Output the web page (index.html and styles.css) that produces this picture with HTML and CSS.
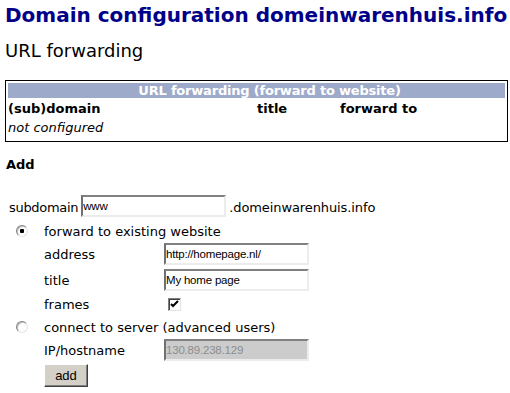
FILE: index.html
```html
<!DOCTYPE html>
<html>
    <head>
        <meta charset="utf-8">
        <title>Domain configuration domeinwarenhuis.info</title>
        <link rel="stylesheet" href="styles.css">
    </head>
    <body>
        <h1>Domain configuration domeinwarenhuis.info</h1>
        <h2>URL forwarding</h2>
        <table class="list" cellspacing="2">
            <colgroup>
                <col class="col_domain">
                <col class="col_title">
                <col>
            </colgroup>
            <tr>
                <th colspan="3" class="caption">URL forwarding (forward to website)</th>
            </tr>
            <tr class="head_row">
                <th>(sub)domain</th>
                <th>title</th>
                <th>forward to</th>
            </tr>
            <tr>
                <td colspan="3" class="empty">not configured</td>
            </tr>
        </table>
        <h3>Add</h3>
        <form class="add_form" onsubmit="return false">
            <div class="sub_row">
                <span class="sub_label">subdomain</span>
                <input type="text" class="txt sub_input" value="www">
                <span>.domeinwarenhuis.info</span>
            </div>
            <div class="opts">
                <input type="radio" name="type" class="radio" checked>
                <span class="opt_label">forward to existing website</span>

                <span></span>
                <span>address</span>
                <input type="text" class="txt" value="http://homepage.nl/">

                <span></span>
                <span>title</span>
                <input type="text" class="txt" value="My home page">

                <span></span>
                <span>frames</span>
                <input type="checkbox" class="check" checked>

                <input type="radio" name="type" class="radio">
                <span class="opt_label">connect to server (advanced users)</span>

                <span></span>
                <span>IP/hostname</span>
                <input type="text" class="txt" value="130.89.238.129" disabled>

                <span></span>
                <span class="btn_cell"><input type="submit" class="btn" value="add"></span>
            </div>
        </form>
    </body>
</html>
```

FILE: styles.css
```css
* {
    margin: 0;
    padding: 0;
}
body {
    margin: 0;
    padding: 0 5px;
    font-family: "DejaVu Sans", Verdana, sans-serif;
    font-size: 13px;
    color: #000;
    background: #fff;
}
h1 {
    font-size: 20px;
    font-weight: bold;
    color: #000088;
    line-height: 24px;
    margin-top: 3px;
    white-space: nowrap;
}
h2 {
    font-size: 18px;
    font-weight: normal;
    line-height: 22px;
    margin-top: 13px;
}
.list {
    width: 503px;
    table-layout: fixed;
    border: 1px solid #000;
    margin-top: 18px;
}
.col_domain {
    width: 247px;
}
.col_title {
    width: 81px;
}
.list th, .list td {
    text-align: left;
    padding: 0;
    line-height: 17px;
    vertical-align: top;
    white-space: nowrap;
}
.list .caption {
    background: #9eaac9;
    color: #fff;
    text-align: center;
    height: 15px;
    line-height: 15px;
    padding-left: 26px;
    letter-spacing: -0.2px;
}
.head_row th {
    height: 17px;
}
.empty {
    font-style: italic;
    height: 20px;
}
h3 {
    font-size: 13px;
    font-weight: bold;
    line-height: 17px;
    margin: 14px 0 0 1px;
}
.add_form {
    padding-left: 4px;
    margin-top: 22px;
}
.sub_row {
    display: flex;
    align-items: center;
    gap: 3px;
    height: 22px;
    letter-spacing: -0.1px;
}
.sub_row span {
    padding-top: 2px;
}
.sub_label {
    letter-spacing: -0.3px;
}
.sub_input {
    width: 145px;
}
.opts {
    display: grid;
    grid-template-columns: 35px 120px 1fr;
    grid-template-rows: 22px 24px 28px 20px 26px 20px 30px;
    align-items: center;
    margin-top: 3px;
}
.opt_label {
    grid-column: span 2;
}
.radio {
    appearance: none;
    width: 12px;
    height: 12px;
    margin-left: 7px;
    border-radius: 50%;
    border: 1px solid;
    border-color: #808080 #e4e4e4 #e4e4e4 #808080;
    background: #fff;
    box-shadow: inset 1px 1px 0 #c0c0c0;
}
.radio:checked {
    background: radial-gradient(circle, #000 0, #000 2px, #fff 2.5px);
}
.txt {
    width: 145px;
    height: 22px;
    padding: 0;
    font-family: "Liberation Sans", Arial, sans-serif;
    font-size: 11.5px;
    letter-spacing: -0.2px;
    color: #000;
    border: 2px solid;
    border-color: #808080 #ececec #ececec #707070;
    background: #fff;
    box-sizing: border-box;
    outline: none;
}
.txt:disabled {
    background: #cccccc;
    color: #8c8c8c;
}
.check {
    appearance: none;
    width: 13px;
    height: 13px;
    margin-left: 4px;
    border: 1px solid;
    border-color: #808080 #e4e4e4 #e4e4e4 #808080;
    background: #fff;
    box-shadow: inset 1px 1px 0 #404040;
}
.check:checked {
    background: #fff url("data:image/svg+xml;utf8,<svg xmlns='http://www.w3.org/2000/svg' width='11' height='11' viewBox='0 0 11 11'><path d='M2 5 L4 7 L9 2' fill='none' stroke='black' stroke-width='2'/></svg>") no-repeat center;
}
.btn {
    width: 44px;
    height: 23px;
    font-family: "Liberation Sans", Arial, sans-serif;
    font-size: 13px;
    color: #000;
    background: #d4d0c8;
    border: 1px solid;
    border-color: #fff #404040 #404040 #fff;
    box-shadow: inset -1px -1px 0 #808080;
}
```
